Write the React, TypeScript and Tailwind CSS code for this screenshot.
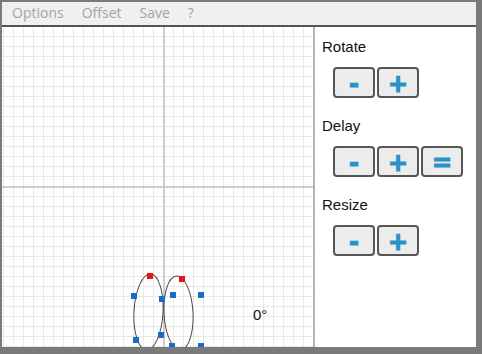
import React from 'react';

/* ------------------------------------------------------------------ */
/*  Spiro editor — menu bar, grid canvas, control panel              */
/* ------------------------------------------------------------------ */

const handlesBlue: [number, number][] = [
  [134, 296], [162, 299], [136, 340], [161, 335],
  [173, 295], [201, 295], [172, 346], [201, 346],
];
const handlesRed: [number, number][] = [
  [150, 276], [182, 279],
];

// canvas origin in page coords
const OX = 2;
const OY = 27;

const Canvas: React.FC = () => {
  const minorV = Array.from({ length: 32 }, (_, i) => 1 + i * 10);
  const minorH = Array.from({ length: 33 }, (_, i) => 9 + i * 10);
  return (
    <svg width="311" height="320" className="block">
      <rect width="311" height="320" fill="#ffffff" />
      {minorV.map((x) => (
        <rect key={'v' + x} x={x} y={0} width={1} height={320} fill="#e9e9e9" />
      ))}
      {minorH.map((y) => (
        <rect key={'h' + y} x={0} y={y} width={311} height={1} fill="#e9e9e9" />
      ))}
      <rect x={161} y={0} width={2} height={320} fill="#cdcdcd" />
      <rect x={0} y={159} width={311} height={2} fill="#cdcdcd" />

      <ellipse cx={148.5 - OX} cy={312 - OY} rx={14.5} ry={38} fill="none" stroke="#4a4a4a" strokeWidth={1} transform={`rotate(3 ${148.5 - OX} ${312 - OY})`} />
      <ellipse cx={178.5 - OX} cy={313 - OY} rx={14.5} ry={37} fill="none" stroke="#4a4a4a" strokeWidth={1} transform={`rotate(-3 ${178.5 - OX} ${313 - OY})`} />

      {handlesBlue.map(([x, y], i) => (
        <rect key={'b' + i} x={x - OX - 3} y={y - OY - 3} width={6} height={6} fill="#1b6cc8" />
      ))}
      {handlesRed.map(([x, y], i) => (
        <rect key={'r' + i} x={x - OX - 3} y={y - OY - 3} width={6} height={6} fill="#e81414" />
      ))}

      <text x={253 - OX} y={320 - OY} fontSize={15} fill="#111" fontFamily="'Liberation Sans', Arial, sans-serif">0°</text>
    </svg>
  );
};

const Btn: React.FC<{ label: string }> = ({ label }) => (
  <button className="w-[42px] h-[31px] border-2 border-[#555555] rounded-[4px] bg-[#ececec] flex items-center justify-center pt-[3px] text-[24px] leading-none font-bold text-[#2a92c6] [-webkit-text-stroke:1.2px_#2a92c6] font-['DejaVu_Sans',sans-serif]">
    {label}
  </button>
);

const Section: React.FC<{ title: string; buttons: string[] }> = ({ title, buttons }) => (
  <div className="flex flex-col">
    <p className="text-[15px] leading-[18px] text-[#111]">{title}</p>
    <div className="flex gap-[2px] ml-[11px] mt-[11px]">
      {buttons.map((b, i) => (
        <Btn key={i} label={b} />
      ))}
    </div>
  </div>
);

const App: React.FC = () => {
  return (
    <div className="w-[482px] h-[354px] bg-[#7a7a7a] pt-[2px] pl-[2px] pr-[6px] pb-[7px] font-['Liberation_Sans',Arial,sans-serif]">
      <div className="w-full h-full flex flex-col bg-white">
        {/* Menu */}
        <div className="h-[25px] shrink-0 bg-[#f0f0f0] border-b-2 border-[#555555] flex items-start pt-[1px] pl-[10px] gap-[18px] font-['Open_Sans',sans-serif] text-[14px] leading-[19px] text-[#a3a3a3]">
          <span>Options</span>
          <span>Offset</span>
          <span>Save</span>
          <span>?</span>
        </div>

        <div className="flex flex-1 min-h-0">
          <div className="w-[311px] shrink-0 overflow-hidden">
            <Canvas />
          </div>
          <div className="w-[2px] shrink-0 bg-[#b4b4b4]" />
          <div className="flex-1 flex flex-col gap-[19px] pt-[11px] pl-[7px]">
            <Section title="Rotate" buttons={['-', '+']} />
            <Section title="Delay" buttons={['-', '+', '=']} />
            <Section title="Resize" buttons={['-', '+']} />
          </div>
        </div>
      </div>
    </div>
  );
};

export default App;
